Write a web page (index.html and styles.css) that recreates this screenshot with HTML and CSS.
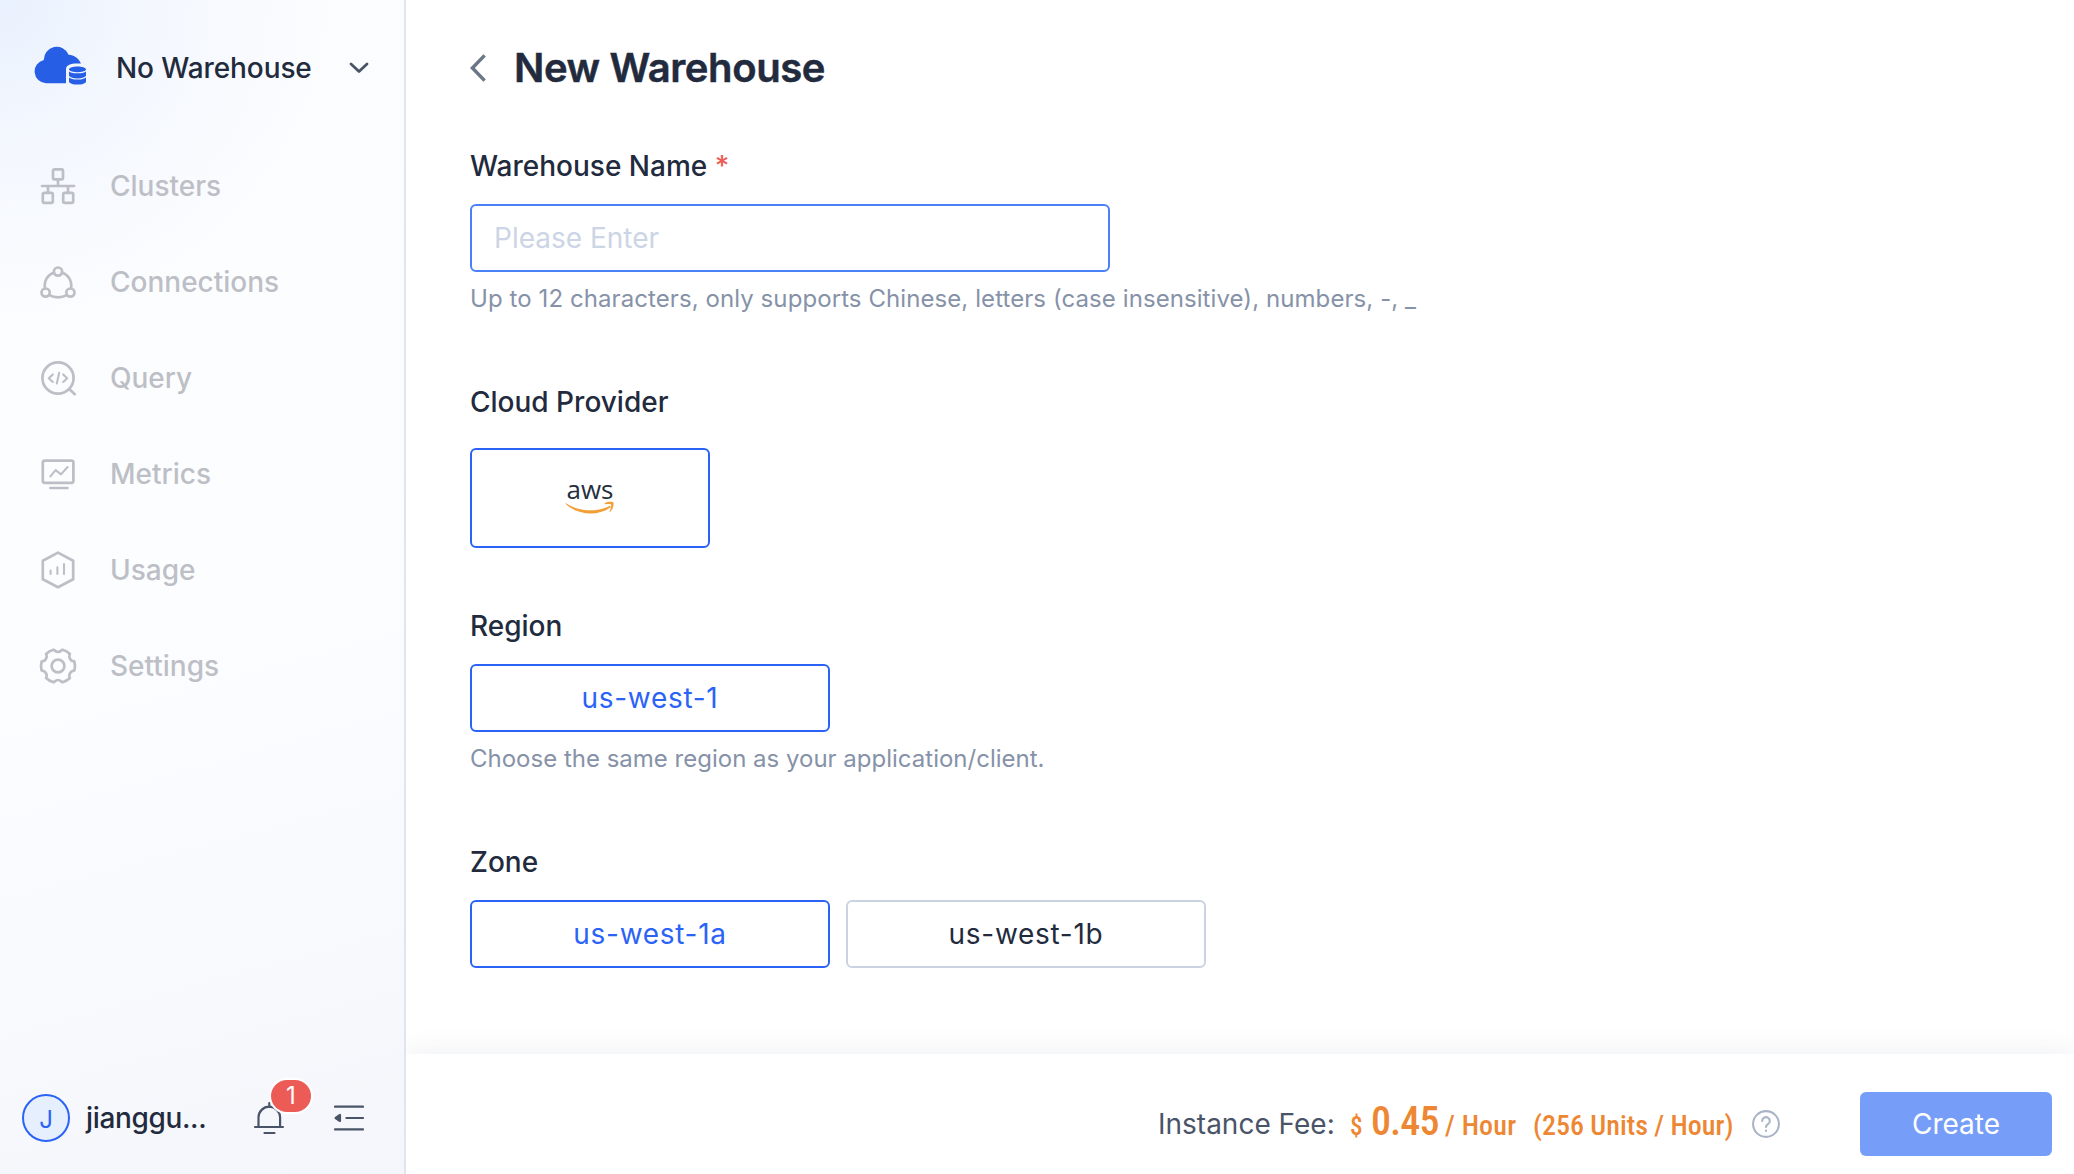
FILE: index.html
```html
<!DOCTYPE html>
<html lang="en">
<head>
<meta charset="utf-8">
<title>New Warehouse</title>
<link rel="stylesheet" href="styles.css">
</head>
<body>
<div class="app">
  <aside class="sidebar">
    <div class="switcher">
      <svg class="logo" width="54" height="40" viewBox="0 0 54 40">
        <path fill="#265fe6" d="M13 38.3A11.8 11.8 0 0 1 10.8 15A12.9 12.9 0 0 1 35.6 9.7C41 10 45.8 13 48 18.6C38 18 33 20 33 24V38.3Z"/>
        <path fill="#265fe6" d="M36 24.5V36.5C36 40.6 53 40.6 53 36.5V24.5C53 20.6 36 20.6 36 24.5Z"/>
        <path fill="none" stroke="#eff4fe" stroke-width="1.1" d="M36 25.4C38 28.6 51 28.6 53 25.4M36 31.4C38 34.8 51 34.8 53 31.4"/>
      </svg>
      <span class="switcher-name">No Warehouse</span>
      <svg class="caret" width="20" height="12" viewBox="0 0 20 12"><path d="M2 2l8 7.6L18 2"/></svg>
    </div>
    <nav class="menu">
      <a class="item"><svg class="icon" viewBox="0 0 40 40"><rect x="15" y="3.3" width="10" height="10" rx="1.5"/><rect x="4.8" y="26.8" width="10" height="10" rx="1.5"/><rect x="25.2" y="26.8" width="10" height="10" rx="1.5"/><path d="M4 20h32M20 13.3V20M10 20v6.8M30 20v6.8"/></svg><span>Clusters</span></a>
      <a class="item"><svg class="icon" viewBox="0 0 40 40"><circle cx="20" cy="9.6" r="4.1"/><circle cx="7.6" cy="30.6" r="4.1"/><circle cx="32.4" cy="30.6" r="4.1"/><path d="M16 10.6C9.5 13 5.6 19 7 26.6M24 10.6C30.5 13 34.4 19 33 26.6M11.4 33.2C16.5 36.2 23.5 36.2 28.6 33.2"/></svg><span>Connections</span></a>
      <a class="item"><svg class="icon" viewBox="0 0 40 40"><circle cx="20" cy="20" r="15.6"/><path d="M31.8 31.6l5 4.6"/><path class="thin" d="M14.8 16.4L10.8 20.2l4 3.8M25.2 16.4l4 3.8-4 3.8M21.2 14.8l-2.4 10.6"/></svg><span>Query</span></a>
      <a class="item"><svg class="icon" viewBox="0 0 40 40"><rect x="4.8" y="6.6" width="30.6" height="22.2" rx="2"/><path d="M12.4 34h17"/><path class="thin" d="M12.4 22.4l5.2-6.2 5.4 4.2 6.6-7.4"/></svg><span>Metrics</span></a>
      <a class="item"><svg class="icon" viewBox="0 0 40 40"><path d="M20 2.6L35.2 10.8V29.2L20 37.2L4.8 29.2V10.8Z"/><path class="thin" d="M12.6 20.6v3.4M19.4 17.4v6.6M26 14v10"/></svg><span>Usage</span></a>
      <a class="item"><svg class="icon" viewBox="-20 -20 40 40"><circle r="6.4"/>
        <path d="M-4.5-16.3C-2.6-15.6-3-14 0-14S2.6-15.6 4.5-16.3C7.5-15.4 10-13.9 11.9-12C11.3-9.8 10.4-9.9 12.1-7S14.9-5.4 16.4-4.3C17.2-1.3 17.2 1.3 16.4 4.3C14.9 5.4 13.8 4.1 12.1 7S11.3 9.8 11.9 12C10 13.9 7.5 15.4 4.5 16.3C2.6 15.6 3 14 0 14S-2.6 15.6-4.5 16.3C-7.5 15.4-10 13.9-11.9 12C-11.3 9.8-10.4 9.9-12.1 7S-14.9 5.4-16.4 4.3C-17.2 1.3-17.2-1.3-16.4-4.3C-14.9-5.4-13.8-4.1-12.1-7S-11.3-9.8-11.9-12C-10-13.9-7.5-15.4-4.5-16.3Z"/></svg><span>Settings</span></a>
    </nav>
    <div class="account">
      <span class="avatar">J</span>
      <span class="user">jianggu...</span>
      <div class="bell">
        <svg width="32" height="34" viewBox="0 0 32 34"><path d="M2 26h28M11.5 32h10M5.5 26V16.5a10.8 10.8 0 0 1 21.6 0V26M16.3 2v4"/></svg>
        <span class="badge">1</span>
      </div>
      <svg class="fold" width="30" height="28" viewBox="0 0 30 28"><path d="M1 2.6h28M12.4 14H29M1 25.4h28"/><path class="solid" d="M1.6 14l4.4-3v6z"/></svg>
    </div>
  </aside>
  <main class="main">
    <div class="content">
      <header class="head">
        <svg width="18" height="28" viewBox="0 0 18 28"><path d="M14.6 1.4L2.4 14l12.2 12.6"/></svg>
        <h1 class="title">New Warehouse</h1>
      </header>
      <section class="field name">
        <label class="label">Warehouse Name <span class="req">*</span></label>
        <input class="input" placeholder="Please Enter">
        <p class="hint rule">Up to 12 characters, only supports Chinese, letters (case insensitive), numbers, -, _</p>
      </section>
      <section class="field provider">
        <label class="label">Cloud Provider</label>
        <div class="option vendor on">
          <span class="aws">aws</span>
          <svg class="smile" width="50" height="14" viewBox="0 0 50 14"><path d="M1 2.2C13 10.6 32 11.6 44.4 5C45.6 4.5 46.4 5.7 45.2 6.6C33 15.4 13 14.4 1 3.2C.4 2.4.6 1.8 1 2.2ZM39.6 2.4C43 .2 47.6.6 48.4 1.4C49.2 2.8 48 8.4 45.2 10.8C44.6 11.2 44.3 10.9 44.6 10.4C45.6 8 46.7 4.6 46 3.6C45.2 2.7 42 3 40 3.2C39.2 3.2 39.1 2.8 39.6 2.4Z"/></svg>
        </div>
      </section>
      <section class="field region">
        <label class="label">Region</label>
        <div class="option on"><span>us-west-1</span></div>
        <p class="hint">Choose the same region as your application/client.</p>
      </section>
      <section class="field zone">
        <label class="label">Zone</label>
        <div class="options">
          <div class="option on"><span>us-west-1a</span></div>
          <div class="option"><span>us-west-1b</span></div>
        </div>
      </section>
    </div>
    <footer class="footer">
      <span class="fee">Instance Fee:</span>
      <div class="price"><span class="cur">$</span><span class="amount">0.45</span><span class="per">/ Hour</span><span class="units">(256 Units / Hour)</span></div>
      <svg class="help" width="30" height="30" viewBox="0 0 30 30"><circle cx="15" cy="15" r="12.9"/><path d="M11.2 12a3.8 3.8 0 1 1 5.8 3.2c-1.5.9-2 1.4-2 2.8M15 21.6v.3"/></svg>
      <button class="create">Create</button>
    </footer>
  </main>
</div>
</body>
</html>
```
FILE: styles.css
```css
* { box-sizing: border-box; }
body { margin: 0; font-family: Inter, "Liberation Sans", sans-serif; font-size: 28px; color: #222b3d; background: #fff; }
p, h1 { margin: 0; font-weight: 400; }
svg { flex: none; display: block; fill: none; stroke-linecap: round; stroke-linejoin: round; }
.app { display: flex; width: 100vw; height: 100vh; overflow: hidden; }

.sidebar { flex: none; width: 406px; display: flex; flex-direction: column; border-right: 2px solid #e1e4f0;
  background: radial-gradient(circle at 0 0, #e9f1fe 0, #f3f7fe 130px, rgba(251,252,255,0) 330px), linear-gradient(165deg, #fbfcfe 0, #fcfdff 50%, #f9fafe 75%, #f5f6fb 100%); }
.switcher { display: flex; align-items: center; height: 136px; padding-left: 33px; }
.logo { margin: -6px 29px 0 0; }
.logo path { stroke-linecap: butt; }
.switcher-name { flex: 1; font-weight: 500; line-height: 34px; letter-spacing: -.1px; white-space: nowrap; }
.caret { margin-right: 35px; stroke: #4a5468; stroke-width: 2.8; }
.menu { flex: 1; margin-top: 2px; }
.item { display: flex; align-items: center; gap: 32px; height: 96px; padding-left: 38px; color: #bdbfc6; font-weight: 500; line-height: 34px; }
.icon { width: 40px; height: 40px; stroke: #bdbfc6; stroke-width: 2.7; }
.thin { stroke-width: 2.1; }
.account { display: flex; align-items: center; height: 112px; padding-left: 22px; }
.avatar { width: 48px; height: 48px; border: 2px solid #2b63f6; border-radius: 50%; background: #e6effe; color: #2b63f6; font-size: 24px; line-height: 47px; text-align: center; }
.user { width: 167px; margin-left: 16px; font-weight: 500; letter-spacing: -.35px; }
.bell { position: relative; stroke: #4a5468; stroke-width: 2.2; }
.badge { position: absolute; left: 18px; top: -21px; width: 40px; height: 32px; border-radius: 16px; background: #ec5b56; box-shadow: 0 0 0 2px #fff; color: #fff; font-size: 24px; line-height: 32px; text-align: center; }
.fold { margin-left: 49px; stroke: #4a5468; stroke-width: 2.2; }
.solid { fill: #4a5468; }

.main { flex: 1; display: flex; flex-direction: column; overflow: hidden; }
.content { flex: 1; padding: 44px 64px 0; }
.head { display: flex; align-items: center; height: 48px; gap: 26px; }
.head svg { stroke: #6b7789; stroke-width: 3.5; stroke-linecap: butt; stroke-linejoin: miter; }
.title { font-size: 40px; font-weight: 600; line-height: 48px; letter-spacing: -.4px; -webkit-text-stroke: .5px; }
.label { display: block; font-weight: 500; line-height: 34px; }
.req { color: #ec5b56; }
.name { margin-top: 57px; }
.input { display: block; width: 640px; height: 68px; margin-top: 21px; padding: 0 22px; border: 2px solid #4a80f8; border-radius: 6px; font: inherit; outline: 0; }
.input::placeholder { color: #cbd5e5; opacity: 1; }
.hint { margin-top: 12px; font-size: 24px; line-height: 30px; color: #8692a8; white-space: nowrap; }
.rule { letter-spacing: .08px; }
.provider { margin-top: 71px; }
.region { margin-top: 61px; }
.zone { margin-top: 71px; }
.options { display: flex; gap: 16px; }
.option { display: flex; align-items: center; justify-content: center; width: 360px; height: 68px; margin-top: 21px; border: 2px solid #cbd3e2; border-radius: 6px; letter-spacing: .7px; }
.on { border-color: #2b63f6; color: #2b63f6; }
.vendor { flex-direction: column; width: 240px; height: 100px; margin-top: 29px; letter-spacing: 0; }
.aws { margin: -2px 0 2px; font: 500 26px/20px "Open Sans", sans-serif; color: #252f3e; }
.smile { fill: #f29f37; }
.footer { display: flex; align-items: center; justify-content: flex-end; height: 120px; padding: 20px 22px 0 0; box-shadow: 0 0 28px rgba(40,60,100,.09); }
.fee { width: 192px; color: #4a5468; }
.price { display: flex; align-items: baseline; width: 401px; margin-top: -6px; color: #ed8733; font-family: Roboto, sans-serif; font-weight: 500; font-stretch: 87%; white-space: nowrap; }
.cur { width: 21px; font-size: 25px; }
.amount { width: 74px; font-size: 40px; font-stretch: 75%; letter-spacing: -.9px; }
.per { width: 88px; letter-spacing: .2px; }
.help { margin-right: 79px; stroke: #a9b4c6; stroke-width: 2.1; }
.create { width: 192px; height: 64px; padding: 0; border: 0; border-radius: 6px; background: #769ef8; color: #fff; font: inherit; }
```
